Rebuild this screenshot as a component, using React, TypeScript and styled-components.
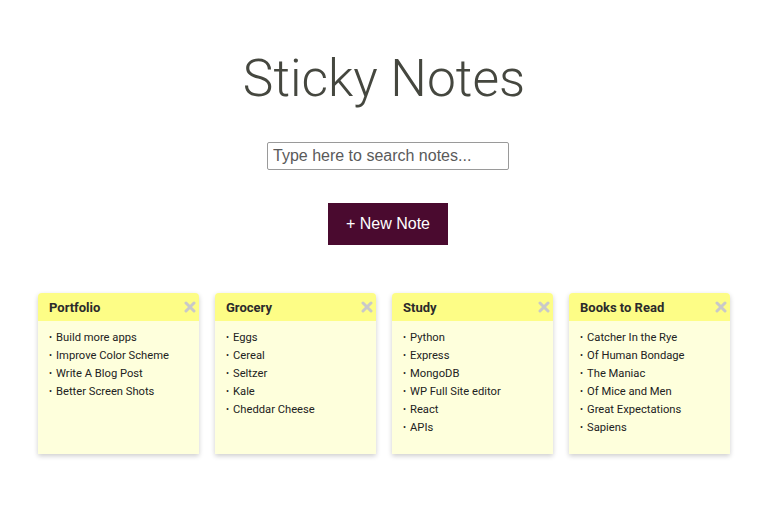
import React, { useState } from "react";
import styled, { createGlobalStyle } from "styled-components";

const GlobalStyle = createGlobalStyle`
  html, body {
    margin: 0;
    padding: 0;
    background: #ffffff;
  }
  * { box-sizing: border-box; }
`;

const Page = styled.div`
  display: flex;
  flex-direction: column;
  align-items: center;
  padding-bottom: 20px;
  font-family: Roboto, "Liberation Sans", sans-serif;
`;

const Title = styled.h1`
  margin: 0;
  padding-top: 48px;
  font-family: Roboto, "Liberation Sans", sans-serif;
  font-weight: 300;
  font-size: 51.5px;
  line-height: 62px;
  color: #45473f;
`;

const Search = styled.input`
  margin: 32px 0 0 8px;
  width: 242px;
  height: 28px;
  padding: 0 5px;
  border: 1px solid #9a9a9a;
  border-radius: 2px;
  font-family: "Liberation Sans", Arial, sans-serif;
  font-size: 16px;
  color: #333;
  outline: none;
  &::placeholder { color: #5a5a5a; }
`;

const NewButton = styled.button`
  margin: 33px 0 0 8px;
  width: 120px;
  height: 42px;
  border: none;
  background: #4a0a2f;
  color: #ffffff;
  font-family: "Liberation Sans", Arial, sans-serif;
  font-size: 16px;
  cursor: pointer;
`;

const Board = styled.div`
  margin-top: 48px;
  display: flex;
  gap: 16px;
  justify-content: center;
`;

const Card = styled.div`
  width: 161px;
  height: 161px;
  background: #feffdc;
  border-radius: 4px 4px 0 0;
  box-shadow: 0 2px 5px rgba(0, 0, 0, 0.2);
  display: flex;
  flex-direction: column;
`;

const CardHeader = styled.div`
  height: 28px;
  background: #fdfd86;
  border-radius: 4px 4px 0 0;
  display: flex;
  align-items: center;
  justify-content: space-between;
  padding: 0 3px 0 11px;
`;

const CardTitle = styled.span`
  font-size: 13px;
  font-weight: 700;
  color: #2b2b2b;
`;

const Close = styled.button`
  border: none;
  background: none;
  padding: 0;
  width: 12px;
  height: 12px;
  display: flex;
  cursor: pointer;
`;

const Items = styled.ul`
  list-style: none;
  margin: 0;
  padding: 8px 0 0 11px;
`;

const Item = styled.li`
  font-size: 11.2px;
  line-height: 18px;
  height: 18px;
  color: #222;
  &::before {
    content: "•";
    font-size: 9px;
    line-height: 0;
    margin-right: 4px;
    vertical-align: 1px;
  }
`;

const CloseIcon = () => (
  <svg width="12" height="12" viewBox="0 0 12 12">
    <path d="M2 2 L10 10 M10 2 L2 10" stroke="#c9c9c9" strokeWidth="3" strokeLinecap="round" />
  </svg>
);

const initialNotes = [
  { title: "Portfolio", items: ["Build more apps", "Improve Color Scheme", "Write A Blog Post", "Better Screen Shots"] },
  { title: "Grocery", items: ["Eggs", "Cereal", "Seltzer", "Kale", "Cheddar Cheese"] },
  { title: "Study", items: ["Python", "Express", "MongoDB", "WP Full Site editor", "React", "APIs"] },
  { title: "Books to Read", items: ["Catcher In the Rye", "Of Human Bondage", "The Maniac", "Of Mice and Men", "Great Expectations", "Sapiens"] },
];

export default function App() {
  const [query, setQuery] = useState("");
  const notes = initialNotes.filter(
    (n) =>
      !query ||
      n.title.toLowerCase().includes(query.toLowerCase()) ||
      n.items.some((i) => i.toLowerCase().includes(query.toLowerCase()))
  );
  return (
    <>
      <GlobalStyle />
      <Page>
        <Title>Sticky Notes</Title>
        <Search
          placeholder="Type here to search notes..."
          value={query}
          onChange={(e) => setQuery(e.target.value)}
        />
        <NewButton>+ New Note</NewButton>
        <Board>
          {notes.map((n) => (
            <Card key={n.title}>
              <CardHeader>
                <CardTitle>{n.title}</CardTitle>
                <Close aria-label="delete note">
                  <CloseIcon />
                </Close>
              </CardHeader>
              <Items>
                {n.items.map((i) => (
                  <Item key={i}>{i}</Item>
                ))}
              </Items>
            </Card>
          ))}
        </Board>
      </Page>
    </>
  );
}
